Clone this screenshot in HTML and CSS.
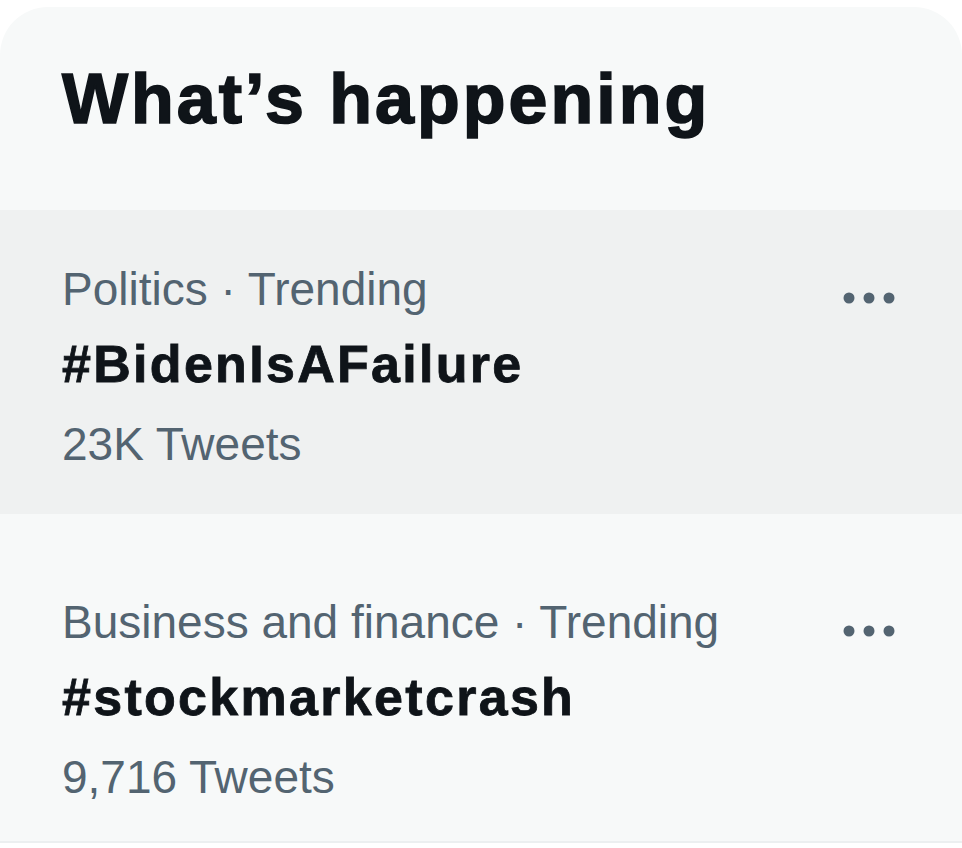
FILE: index.html
```html
<!DOCTYPE html>
<html lang="en">
<head>
<meta charset="utf-8">
<title>What's happening</title>
<link rel="stylesheet" href="styles.css">
</head>
<body>
<section class="card">
  <h2 class="card-title">What’s happening</h2>
  <div class="trend trend--hover">
    <div class="trend-body">
      <div class="trend-meta">Politics · Trending</div>
      <div class="trend-name">#BidenIsAFailure</div>
      <div class="trend-count">23K Tweets</div>
    </div>
    <button class="more" aria-label="More">
      <svg width="52" height="12" viewBox="0 0 52 12"><circle cx="6" cy="6" r="5.5"/><circle cx="26" cy="6" r="5.5"/><circle cx="46" cy="6" r="5.5"/></svg>
    </button>
  </div>
  <div class="trend trend--last">
    <div class="trend-body">
      <div class="trend-meta">Business and finance · Trending</div>
      <div class="trend-name">#stockmarketcrash</div>
      <div class="trend-count">9,716 Tweets</div>
    </div>
    <button class="more" aria-label="More">
      <svg width="52" height="12" viewBox="0 0 52 12"><circle cx="6" cy="6" r="5.5"/><circle cx="26" cy="6" r="5.5"/><circle cx="46" cy="6" r="5.5"/></svg>
    </button>
  </div>
</section>
</body>
</html>
```

FILE: styles.css
```css
html, body {
  margin: 0;
  padding: 0;
  background: #ffffff;
}

body {
  font-family: "Liberation Sans", Arial, sans-serif;
  color: #0f1419;
  padding-top: 7px;
}

.card {
  background: #f7f9f9;
  border-radius: 48px 48px 0 0;
  border-bottom: 2px solid #eceff0;
  overflow: hidden;
}

.card-title {
  margin: 0;
  padding: 50px 62px 69px;
  font-size: 70px;
  line-height: 84px;
  font-weight: 700;
  letter-spacing: 3px;
  -webkit-text-stroke: 1.6px #0f1419;
}

.trend {
  display: flex;
  align-items: flex-start;
  padding: 52px 67px 42px 62px;
}

.trend--hover {
  background: #eff1f1;
}

.trend--last {
  padding-top: 81px;
  padding-bottom: 36px;
}

.trend-body {
  flex: 1;
  display: flex;
  flex-direction: column;
}

.trend-meta,
.trend-count {
  font-size: 46px;
  line-height: 55px;
  color: #536471;
}

.trend-name {
  margin: 13px 0 18px;
  font-size: 52px;
  line-height: 69px;
  font-weight: 700;
  letter-spacing: 2.3px;
  -webkit-text-stroke: 0.8px #0f1419;
}

.more {
  flex: none;
  display: flex;
  align-items: center;
  justify-content: center;
  width: 52px;
  height: 72px;
  padding: 0;
  border: 0;
  background: transparent;
  fill: #536471;
}

.more svg {
  display: block;
}
```
